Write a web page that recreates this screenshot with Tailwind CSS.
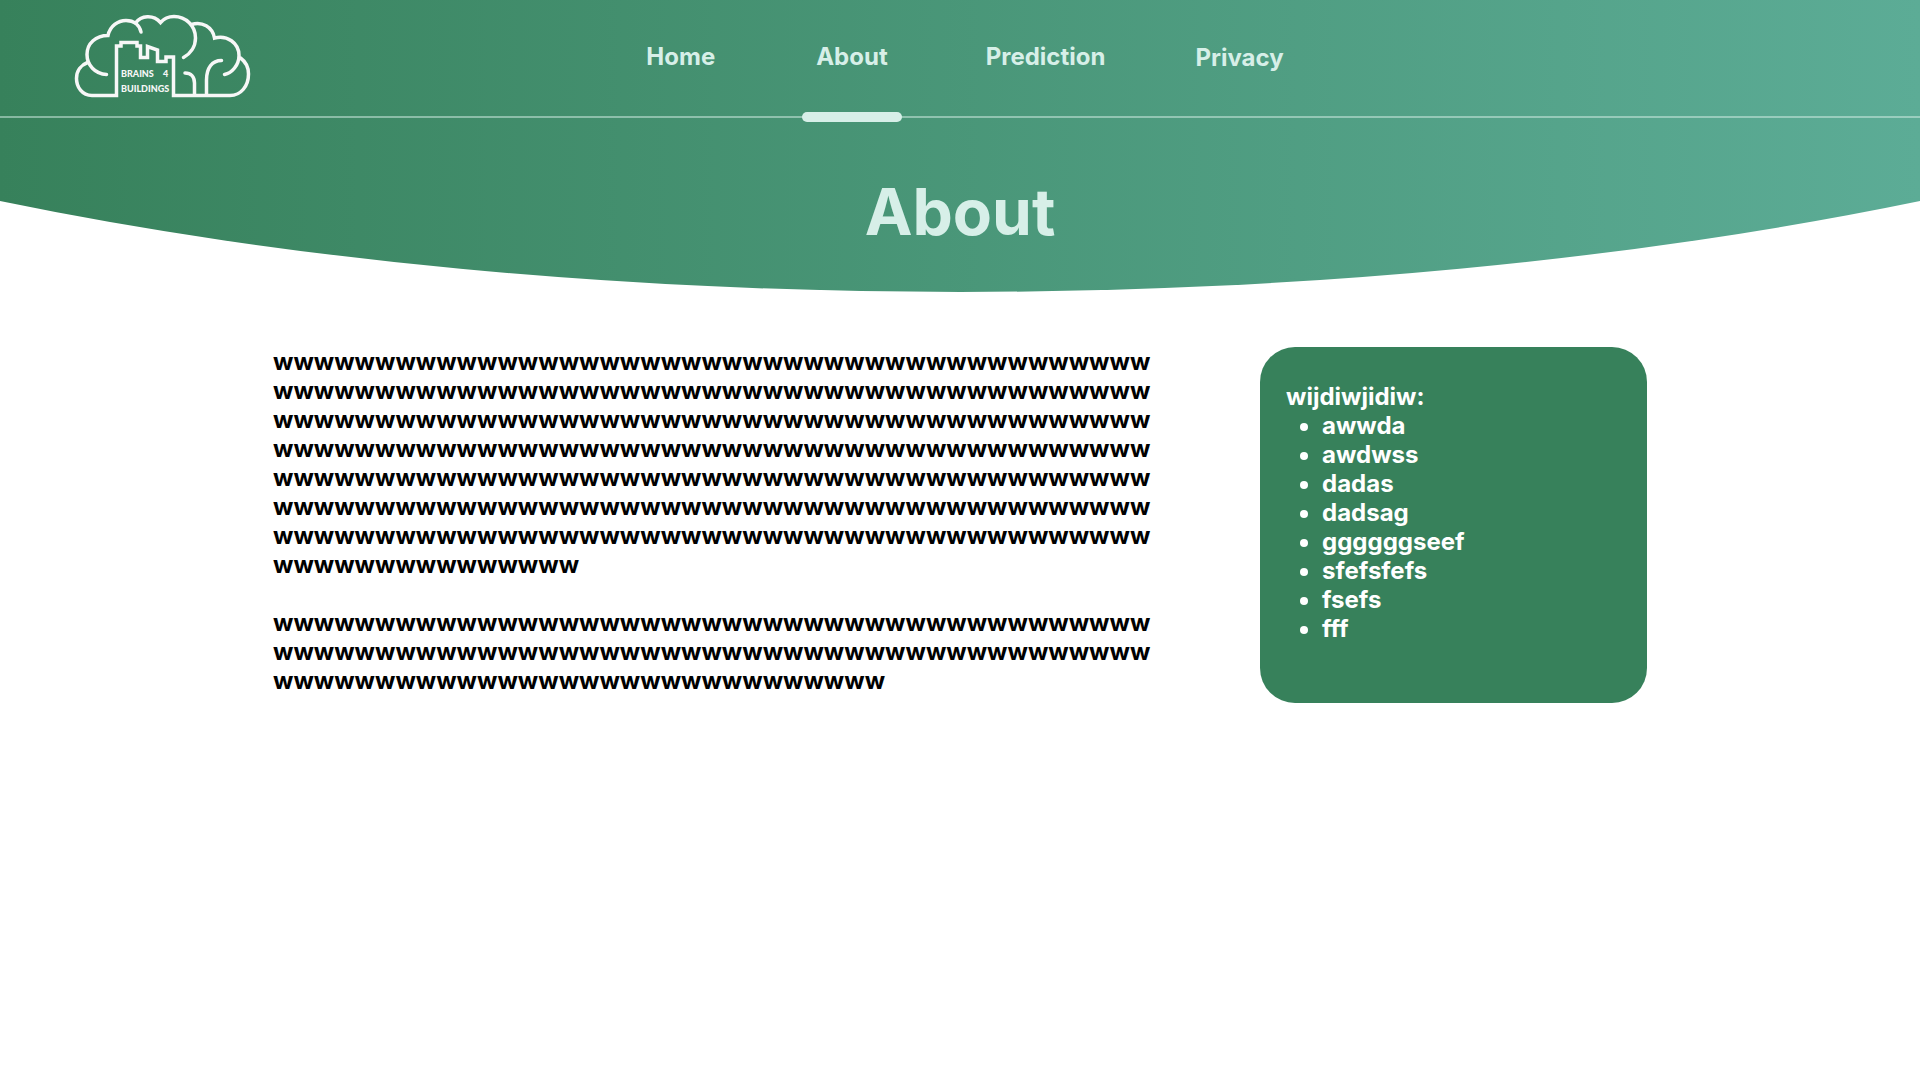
<!DOCTYPE html>
<html lang="en">
<head>
<meta charset="utf-8">
<title>About</title>
<script src="https://cdn.jsdelivr.net/npm/@tailwindcss/browser@4"></script>
</head>
<body class="min-h-screen bg-white font-['Inter',sans-serif] text-2xl/[29px] font-bold text-black">
<header class="relative isolate h-[292px] text-[#d7efe8]">
  <!-- curved banner -->
  <svg class="absolute inset-0 -z-10 h-full w-full" viewBox="0 0 1920 292" preserveAspectRatio="none" aria-hidden="true">
    <defs><linearGradient id="banner" gradientUnits="userSpaceOnUse" x1="0" y1="146" x2="1920" y2="146"><stop offset="0" stop-color="#37815b"/><stop offset="1" stop-color="#5cac96"/></linearGradient></defs>
    <path fill="url(#banner)" d="M0 0H1920V201A1800 590 0 0 1 0 201Z"/>
  </svg>
  <div class="grid h-[118px] grid-cols-[1fr_auto_1fr] border-b-2 border-[#d7efe8]/50">
    <a href="#" aria-label="Brains 4 Buildings" class="ml-[74px] mt-3 h-[88px] w-[178px]">
      <svg class="h-full w-full" viewBox="74 12 178 88" fill="none" stroke="#f7f7f7" stroke-width="3.5" stroke-linecap="round" stroke-linejoin="miter">
        <path d="M106.500 74.500C95 74 87 65 87 54.500C87 43 96 35.500 108 35.500C110 26 118 20.500 126 20.500C134 20.500 139.500 25 141 32"/>
        <path d="M87.500 62.500C81 65 76.500 71 76.500 78.500C76.500 87 82 95.500 92 95.500H116.500V46H121V42.500H137V46H140.500V57.500H147.500V46.500L157.500 50V61.500H166V57H173.500V95.500H230C241 95.500 248.500 86 248.500 74C248.500 68 246 62 240.500 58"/>
        <path d="M135.500 23C141 15.500 153 14 160.500 22.500C164 18.500 169 16.500 174 16.500C186 16.500 195.500 26 195.500 38C195.500 47 190 54 183.500 57.500"/>
        <path d="M191.500 24.500C202 21 212.500 27 214.500 38C227 34.500 239 43 239 55.500C239 65 232 73 224.500 74.500"/>
        <path d="M185 73C191 73 194.500 77 194.500 83V95"/>
        <path d="M206.500 95V80C206.500 68 212 60.500 221.500 60.500"/>
        <g fill="#f7f7f7" stroke="none" font-family="Lato,sans-serif" font-weight="900" font-size="9">
          <text x="121" y="77">BRAINS</text><text x="163" y="77">4</text><text x="121" y="92">BUILDINGS</text>
        </g>
      </svg>
    </a>
    <nav class="flex h-full pl-[10px]" aria-label="Main">
      <a href="#" class="mr-[101px] pt-[42px]">Home</a>
      <a href="#" aria-current="page" class="relative mr-[98px] pt-[42px]">About<span class="absolute top-28 left-1/2 h-[10px] w-[100px] -translate-x-1/2 rounded-full bg-[#d7efe8]"></span></a>
      <a href="#" class="mr-[90px] pt-[42px]">Prediction</a>
      <a href="#" class="pt-[43px]">Privacy</a>
    </nav>
    <div></div>
  </div>
  <h1 class="pt-[55px] text-center text-[64px]/[77px]">About</h1>
</header>
<main class="mx-auto flex w-[1374px] max-w-full items-start justify-between pt-[55px]">
  <div class="w-[880px] space-y-[29px] break-all">
    <p>
      wwwwwwwwwwwwwwwwwwwwwwwwwwwwwwwwwwwwwwwwwww
      wwwwwwwwwwwwwwwwwwwwwwwwwwwwwwwwwwwwwwwwwww
      wwwwwwwwwwwwwwwwwwwwwwwwwwwwwwwwwwwwwwwwwww
      wwwwwwwwwwwwwwwwwwwwwwwwwwwwwwwwwwwwwwwwwww
      wwwwwwwwwwwwwwwwwwwwwwwwwwwwwwwwwwwwwwwwwww
      wwwwwwwwwwwwwwwwwwwwwwwwwwwwwwwwwwwwwwwwwww
      wwwwwwwwwwwwwwwwwwwwwwwwwwwwwwwwwwwwwwwwwww
      wwwwwwwwwwwwwww
    </p>
    <p>wwwwwwwwwwwwwwwwwwwwwwwwwwwwwwwwwwwwwwwwwwwwwwwwwwwwwwwwwwwwwwwwwwwwwwwwwwwwwwwwwwwwwwwwwwwwwwwwwwwwwwwwwwwwwwwwwwww</p>
  </div>
  <aside class="w-[387px] rounded-[35px] bg-[#37815b] px-[26px] pt-[35px] pb-[60px] text-white">
    <h2>wijdiwjidiw:</h2>
    <ul class="list-disc pl-9">
      <li>awwda</li><li>awdwss</li><li>dadas</li><li>dadsag</li><li>ggggggseef</li><li>sfefsfefs</li><li>fsefs</li><li>fff</li>
    </ul>
  </aside>
</main>
</body>
</html>
